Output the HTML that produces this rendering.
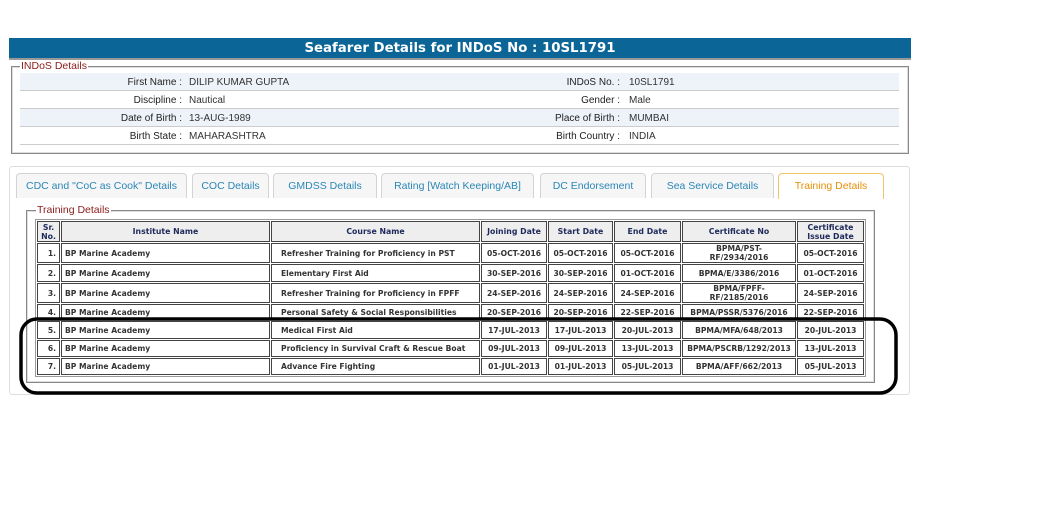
<!DOCTYPE html>
<html><head><meta charset="utf-8"><style>
*{margin:0;padding:0;box-sizing:border-box}
body{width:1044px;height:509px;background:#fff;position:relative;overflow:hidden;font-family:"Liberation Sans",Arial,sans-serif}
.hdr{position:absolute;left:9px;top:38px;width:902px;height:22px;background:#0b6597;color:#fff;font:bold 13.3px "DejaVu Sans",Verdana,sans-serif;text-align:center;line-height:21px;border-bottom:2px solid #999}
.fs{position:absolute;border:1px solid #888;box-shadow:inset 0 0 0 1px #ddd}
.lg{position:absolute;background:#fff;color:#8b1a1a;font-size:10.5px;padding:0 1px;line-height:12px}
.row{position:absolute;left:20px;width:879px;height:18px;border-bottom:1px solid #ccc;font-size:10px;color:#333;line-height:20px}
.row.a{background:#eef3fa}
.row span{position:absolute}
.l1{right:717px;text-align:right;color:#222}
.v1{left:169px}
.l2{right:279px;color:#222}
.v2{left:609px}
.panel{position:absolute;left:9px;top:166px;width:901px;height:229px;border:1px solid #ddd;border-radius:3px}
.tab{position:absolute;top:173px;height:25px;border:1px solid #d3d3d3;border-bottom:none;border-radius:4px 4px 0 0;background:#f6f6f6;color:#2a86b8;font-size:10.5px;text-align:center;line-height:25px}
.tab.act{background:#fff;border-color:#f2c46a;color:#e78f08;height:26px}
table{position:absolute;left:35px;top:219px;width:831px;table-layout:fixed;border-collapse:separate;border-spacing:1px;border:1px solid #999;background:#fff;font:bold 7.6px "DejaVu Sans",Verdana,sans-serif;color:#333}
td,th{border:1px solid #444;padding:0 3px;line-height:9px;white-space:nowrap;overflow:hidden}
th{background:#eee;color:#1e2a5c;font-size:7.8px;text-align:center}
td.k{padding-left:9px}
td.c{text-align:center}td.r{text-align:right}
</style></head><body>
<div class="hdr">Seafarer Details for INDoS No : 10SL1791</div>
<div class="fs" style="left:11px;top:66px;width:898px;height:88px"></div>
<div class="lg" style="left:20px;top:60px">INDoS Details</div>
<div class="row a" style="top:73px"><span class="l1">First Name :</span><span class="v1">DILIP KUMAR GUPTA</span><span class="l2">INDoS No. :</span><span class="v2">10SL1791</span></div>
<div class="row" style="top:91px"><span class="l1">Discipline :</span><span class="v1">Nautical</span><span class="l2">Gender :</span><span class="v2">Male</span></div>
<div class="row a" style="top:109px"><span class="l1">Date of Birth :</span><span class="v1">13-AUG-1989</span><span class="l2">Place of Birth :</span><span class="v2">MUMBAI</span></div>
<div class="row" style="top:127px"><span class="l1">Birth State :</span><span class="v1">MAHARASHTRA</span><span class="l2">Birth Country :</span><span class="v2">INDIA</span></div>

<div class="panel"></div>
<div class="tab" style="left:16px;width:171px">CDC and "CoC as Cook" Details</div>
<div class="tab" style="left:192px;width:77px">COC Details</div>
<div class="tab" style="left:273px;width:104px">GMDSS Details</div>
<div class="tab" style="left:381px;width:153px">Rating [Watch Keeping/AB]</div>
<div class="tab" style="left:540px;width:106px">DC Endorsement</div>
<div class="tab" style="left:651px;width:123px">Sea Service Details</div>
<div class="tab act" style="left:778px;width:106px">Training Details</div>

<div class="fs" style="left:26px;top:210px;width:849px;height:173px"></div>
<div class="lg" style="left:36px;top:204px">Training Details</div>
<table>
<colgroup><col style="width:23px"><col style="width:209px"><col style="width:209px"><col style="width:66px"><col style="width:65px"><col style="width:67px"><col style="width:114px"><col style="width:67px"></colgroup>
<tr style="height:21px"><th>Sr.<br>No.</th><th>Institute Name</th><th>Course Name</th><th>Joining Date</th><th>Start Date</th><th>End Date</th><th>Certificate No</th><th>Certificate<br>Issue Date</th></tr>
<tr style="height:20px"><td class="r">1.</td><td>BP Marine Academy</td><td class="k">Refresher Training for Proficiency in PST</td><td class="c">05-OCT-2016</td><td class="c">05-OCT-2016</td><td class="c">05-OCT-2016</td><td class="c">BPMA/PST-<br>RF/2934/2016</td><td class="c">05-OCT-2016</td></tr>
<tr style="height:18px"><td class="r">2.</td><td>BP Marine Academy</td><td class="k">Elementary First Aid</td><td class="c">30-SEP-2016</td><td class="c">30-SEP-2016</td><td class="c">01-OCT-2016</td><td class="c">BPMA/E/3386/2016</td><td class="c">01-OCT-2016</td></tr>
<tr style="height:20px"><td class="r">3.</td><td>BP Marine Academy</td><td class="k">Refresher Training for Proficiency in FPFF</td><td class="c">24-SEP-2016</td><td class="c">24-SEP-2016</td><td class="c">24-SEP-2016</td><td class="c">BPMA/FPFF-<br>RF/2185/2016</td><td class="c">24-SEP-2016</td></tr>
<tr style="height:16px"><td class="r">4.</td><td>BP Marine Academy</td><td class="k">Personal Safety &amp; Social Responsibilities</td><td class="c">20-SEP-2016</td><td class="c">20-SEP-2016</td><td class="c">22-SEP-2016</td><td class="c">BPMA/PSSR/5376/2016</td><td class="c">22-SEP-2016</td></tr>
<tr style="height:18px"><td class="r">5.</td><td>BP Marine Academy</td><td class="k">Medical First Aid</td><td class="c">17-JUL-2013</td><td class="c">17-JUL-2013</td><td class="c">20-JUL-2013</td><td class="c">BPMA/MFA/648/2013</td><td class="c">20-JUL-2013</td></tr>
<tr style="height:17px"><td class="r">6.</td><td>BP Marine Academy</td><td class="k">Proficiency in Survival Craft &amp; Rescue Boat</td><td class="c">09-JUL-2013</td><td class="c">09-JUL-2013</td><td class="c">13-JUL-2013</td><td class="c">BPMA/PSCRB/1292/2013</td><td class="c">13-JUL-2013</td></tr>
<tr style="height:17px"><td class="r">7.</td><td>BP Marine Academy</td><td class="k">Advance Fire Fighting</td><td class="c">01-JUL-2013</td><td class="c">01-JUL-2013</td><td class="c">05-JUL-2013</td><td class="c">BPMA/AFF/662/2013</td><td class="c">05-JUL-2013</td></tr>
</table>
<svg style="position:absolute;left:0;top:0" width="1044" height="509"><rect x="21" y="319" width="875" height="74" rx="16" ry="16" fill="none" stroke="#000" stroke-width="3.5"/></svg>
</body></html>
